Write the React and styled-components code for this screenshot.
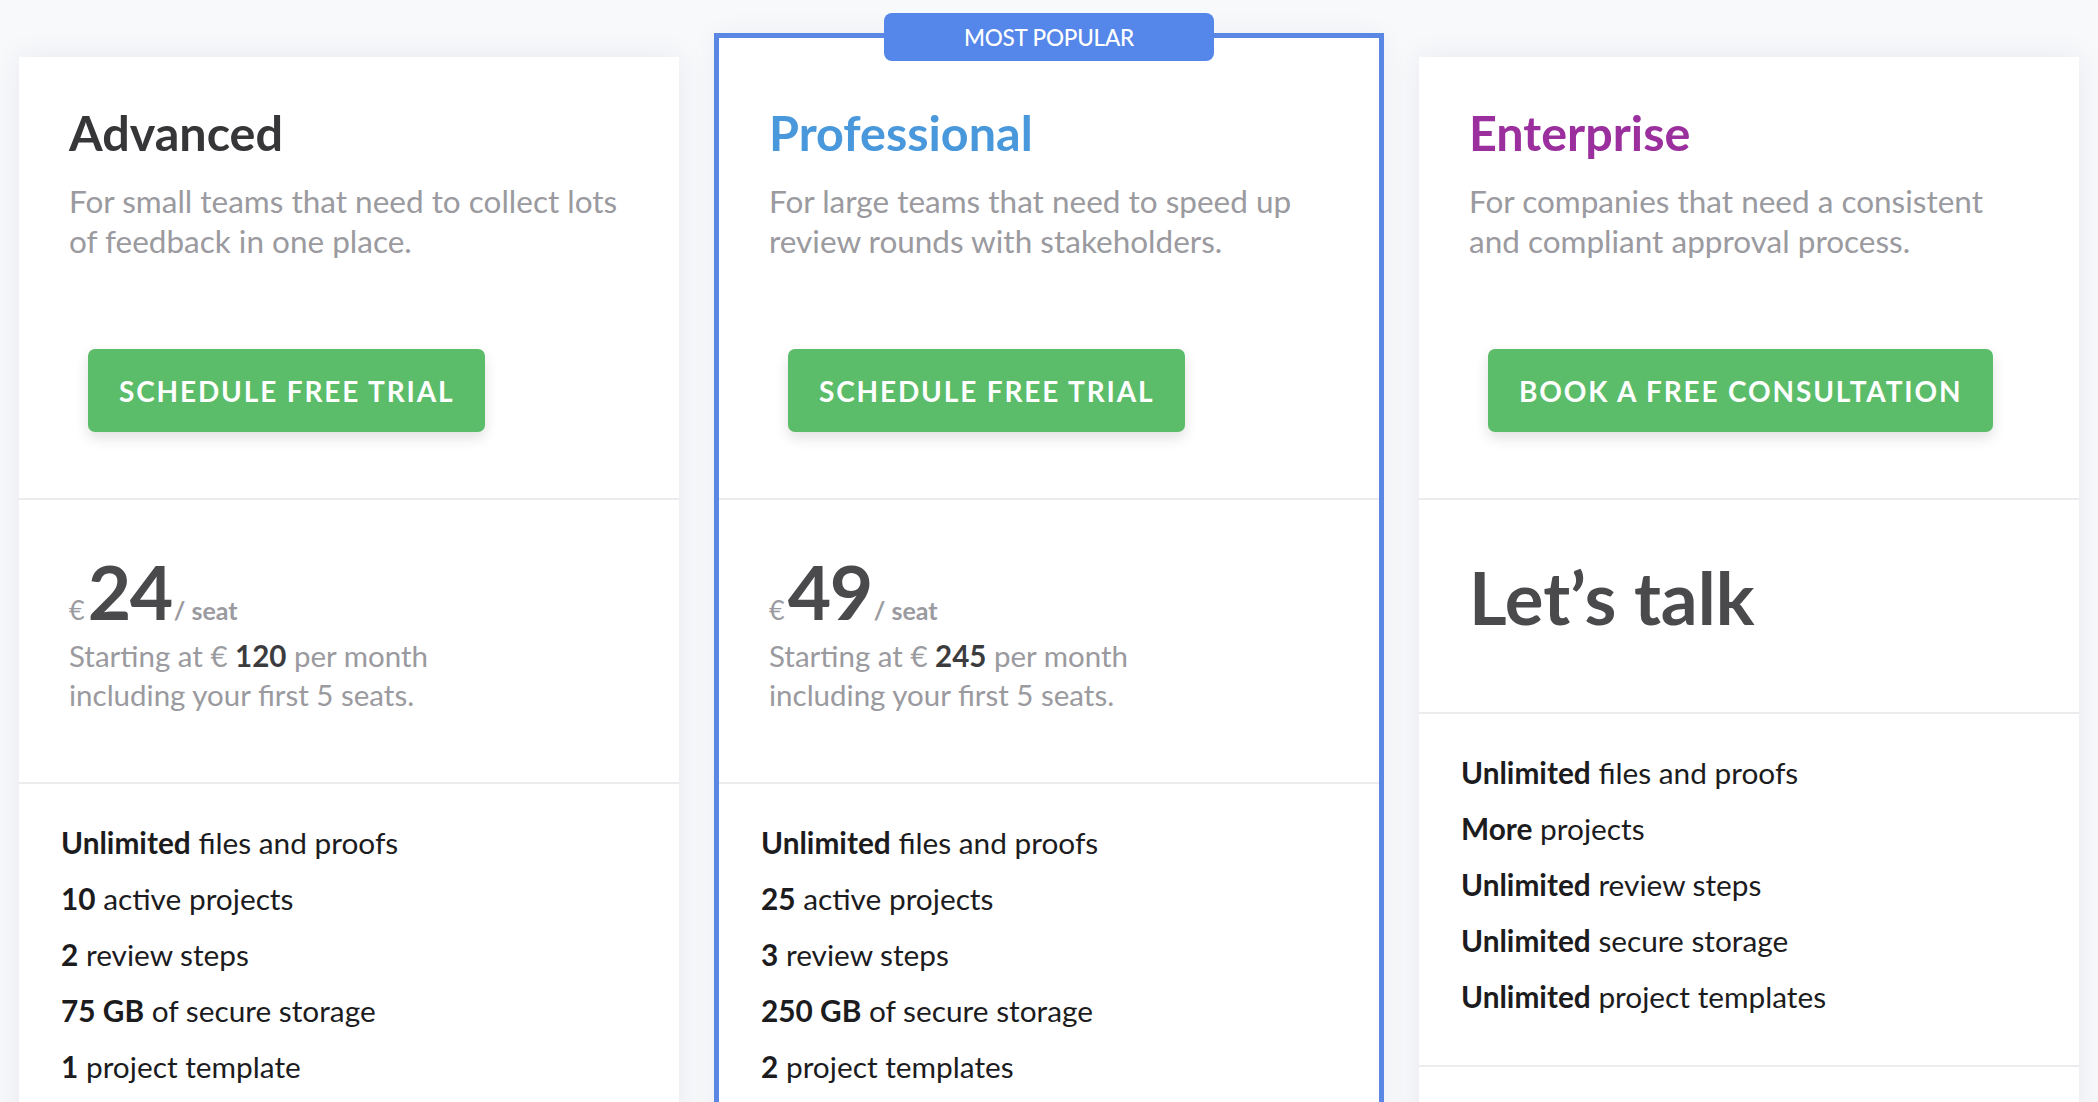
import React from "react";
import styled, { createGlobalStyle, css } from "styled-components";

const GlobalStyle = createGlobalStyle`
  html, body { margin: 0; padding: 0; }
  body {
    background: #f8f9fb;
    font-family: Lato, "Open Sans", "Liberation Sans", sans-serif;
    -webkit-font-smoothing: antialiased;
  }
  * { box-sizing: border-box; }
`;

const Page = styled.main`
  padding: 57px 19px 0;
`;

const Grid = styled.div`
  display: grid;
  grid-template-columns: repeat(3, 660px);
  column-gap: 40px;
  align-items: start;
`;

const Card = styled.section`
  position: relative;
  background: #ffffff;
  box-shadow: 0 0 28px rgba(40, 50, 80, 0.08);
  ${(p) =>
    p.$featured &&
    css`
      margin-top: -19px;
      padding-top: 19px;
      box-shadow: 0 0 0 5px #5a87e3, 0 0 28px rgba(40, 50, 80, 0.08);
    `}
`;

const Badge = styled.div`
  position: absolute;
  top: -25px;
  left: 50%;
  transform: translateX(-50%);
  width: 330px;
  height: 48px;
  border-radius: 8px;
  background: #5586e9;
  color: #ffffff;
  font-size: 22.5px;
  font-weight: 500;
  letter-spacing: -0.2px;
  display: flex;
  align-items: center;
  justify-content: center;
`;

const Section = styled.div`
  border-bottom: 2px solid #ececef;
`;

const Header = styled(Section)`
  padding: 46px 50px 66px;
`;

const Title = styled.h2`
  margin: 0;
  font-size: 48.5px;
  line-height: 1.2;
  font-weight: 700;
  color: ${(p) => p.$color};
`;

const Description = styled.p`
  margin: 20px 0 0;
  font-size: 31.5px;
  line-height: 40px;
  font-weight: 400;
  color: #9a9a9f;
  min-height: 80px;
`;

const CTA = styled.button`
  margin: 88px 0 0 19px;
  height: 83px;
  padding: 0 31px;
  border: none;
  border-radius: 7px;
  background: #5bbd6a;
  color: #ffffff;
  font-family: inherit;
  font-size: 28px;
  font-weight: 700;
  letter-spacing: 1.85px;
  text-transform: uppercase;
  box-shadow: 0 6px 14px rgba(0, 0, 0, 0.12);
  cursor: pointer;
`;

const PriceBlock = styled(Section)`
  padding: ${(p) => (p.$talk ? "61px 50px 78px" : "54px 50px 68px")};
`;

const PriceRow = styled.div`
  display: flex;
  align-items: baseline;
  line-height: 1;
  color: #4a4a4c;
`;

const Currency = styled.span`
  font-size: 27px;
  color: #9a9a9f;
  margin-right: 3px;
`;

const Amount = styled.span`
  font-size: 75px;
  font-weight: 700;
  letter-spacing: -1.5px;
`;

const Per = styled.span`
  font-size: 25px;
  font-weight: 700;
  color: #9a9a9f;
  margin-left: 2px;
`;

const Talk = styled.div`
  font-size: 72.5px;
  line-height: 1;
  font-weight: 700;
  color: #4a4a4c;
`;

const PriceNote = styled.p`
  margin: 7px 0 0;
  font-size: 29.5px;
  line-height: 39px;
  color: #9a9a9f;
  b {
    color: #3c3c3e;
    font-weight: 700;
  }
`;

const Features = styled.ul`
  list-style: none;
  margin: 0;
  padding: 31px 40px 40px 42px;
  border-bottom: 2px solid #ececef;
`;

const Feature = styled.li`
  font-size: 29.8px;
  line-height: 56px;
  color: #1c1c1e;
  b {
    font-weight: 700;
  }
`;

const Footer = styled.div`
  height: 120px;
`;

const plans = [
  {
    name: "Advanced",
    color: "#363638",
    desc: "For small teams that need to collect lots of feedback in one place.",
    cta: "Schedule free trial",
    price: "24",
    monthly: "120",
    features: [
      ["Unlimited", "files and proofs"],
      ["10", "active projects"],
      ["2", "review steps"],
      ["75 GB", "of secure storage"],
      ["1", "project template"],
    ],
  },
  {
    name: "Professional",
    color: "#4a98dc",
    featured: true,
    desc: "For large teams that need to speed up review rounds with stakeholders.",
    cta: "Schedule free trial",
    price: "49",
    monthly: "245",
    features: [
      ["Unlimited", "files and proofs"],
      ["25", "active projects"],
      ["3", "review steps"],
      ["250 GB", "of secure storage"],
      ["2", "project templates"],
    ],
  },
  {
    name: "Enterprise",
    color: "#9a2f9d",
    desc: "For companies that need a consistent and compliant approval process.",
    cta: "Book a free consultation",
    talk: true,
    features: [
      ["Unlimited", "files and proofs"],
      ["More", "projects"],
      ["Unlimited", "review steps"],
      ["Unlimited", "secure storage"],
      ["Unlimited", "project templates"],
    ],
  },
];

function Plan({ plan }) {
  return (
    <Card $featured={plan.featured}>
      {plan.featured && <Badge>MOST POPULAR</Badge>}
      <Header>
        <Title $color={plan.color}>{plan.name}</Title>
        <Description>{plan.desc}</Description>
        <CTA>{plan.cta}</CTA>
      </Header>
      <PriceBlock $talk={plan.talk}>
        {plan.talk ? (
          <Talk>Let’s talk</Talk>
        ) : (
          <>
            <PriceRow>
              <Currency>€</Currency>
              <Amount>{plan.price}</Amount>
              <Per>/ seat</Per>
            </PriceRow>
            <PriceNote>
              Starting at € <b>{plan.monthly}</b> per month
              <br />
              including your first 5 seats.
            </PriceNote>
          </>
        )}
      </PriceBlock>
      <Features>
        {plan.features.map(([strong, rest], i) => (
          <Feature key={i}>
            <b>{strong}</b> {rest}
          </Feature>
        ))}
      </Features>
      <Footer />
    </Card>
  );
}

export default function App() {
  return (
    <>
      <GlobalStyle />
      <Page>
        <Grid>
          {plans.map((p) => (
            <Plan key={p.name} plan={p} />
          ))}
        </Grid>
      </Page>
    </>
  );
}
